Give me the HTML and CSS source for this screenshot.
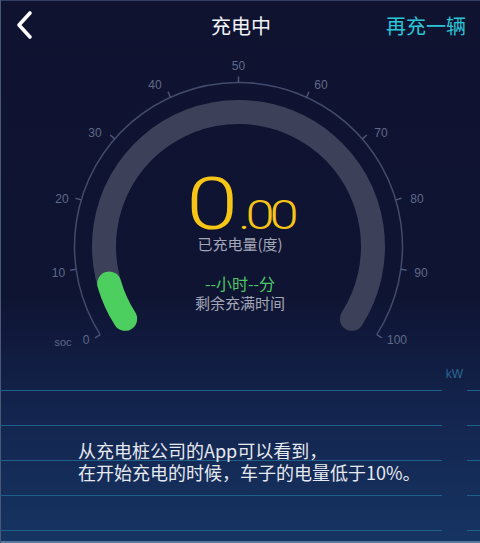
FILE: index.html
```html
<!DOCTYPE html>
<html lang="zh-CN">

<head>
  <meta charset="UTF-8">
  <title>充电中</title>
  <link rel="stylesheet" href="styles.css">
</head>

<body>

  <div class="screen">

    <header class="topbar">
      <a class="back" href="#">
        <svg width="20" height="30" viewBox="0 0 20 30">
          <polyline points="14,3 3,15 14,27" />
        </svg>
      </a>
      <h1 class="title">充电中</h1>
      <a class="action" href="#">再充一辆</a>
    </header>

    <section class="gauge">
      <svg class="dial" width="480" height="305" viewBox="0 50 480 305">
        <!-- outer scale -->
        <path class="scale" d="M100.2 334.6 A164 164 0 1 1 376.8 334.6" />
        <g class="ticks">
          <line x1="100.2" y1="334.6" x2="95.1" y2="337.8" />
          <line x1="76.1" y1="269.3" x2="70.2" y2="270.2" />
          <line x1="81.3" y1="199.9" x2="75.5" y2="198.2" />
          <line x1="114.7" y1="138.9" x2="110.2" y2="135.0" />
          <line x1="170.5" y1="97.3" x2="168.0" y2="91.8" />
          <line x1="238.5" y1="82.5" x2="238.5" y2="76.5" />
          <line x1="306.5" y1="97.3" x2="309.0" y2="91.8" />
          <line x1="362.3" y1="138.9" x2="366.8" y2="135.0" />
          <line x1="395.7" y1="199.9" x2="401.5" y2="198.2" />
          <line x1="400.9" y1="269.3" x2="406.8" y2="270.2" />
          <line x1="376.8" y1="334.6" x2="381.9" y2="337.8" />
        </g>
        <g class="labels">
          <text x="63" y="342" class="soc">soc</text>
          <text x="86" y="340">0</text>
          <text x="58.5" y="273">10</text>
          <text x="62" y="199">20</text>
          <text x="95" y="133">30</text>
          <text x="155" y="85">40</text>
          <text x="238.5" y="66">50</text>
          <text x="321" y="85">60</text>
          <text x="381" y="133">70</text>
          <text x="417" y="199">80</text>
          <text x="421" y="273">90</text>
          <text x="397" y="340">100</text>
        </g>
        <!-- track and level -->
        <path class="track" d="M125.1 318.8 A134.5 134.5 0 1 1 351.9 318.8" />
        <path class="level" d="M125.1 318.8 A134.5 134.5 0 0 1 109.2 283.6" />
      </svg>

      <div class="readout">
        <div class="value"><span class="int">0</span><span class="dec">.00</span></div>
        <div class="caption-sm">已充电量(度)</div>
        <div class="remain">--小时--分</div>
        <div class="caption-sm">剩余充满时间</div>
      </div>
    </section>

    <section class="chart">
      <div class="unit-row"><span class="unit">kW</span></div>
      <div class="rule"><span></span><span></span></div>
      <div class="rule"><span></span><span></span></div>
      <div class="rule"><span></span><span></span></div>
      <div class="rule"><span></span><span></span></div>
      <div class="rule"><span></span><span></span></div>

      <p class="note">从充电桩公司的App可以看到，<br>在开始充电的时候，车子的电量低于10%。</p>
    </section>

  </div>

</body>

</html>
```

FILE: styles.css
```css
body {
  margin: 0;
  font-family: "Noto Sans CJK SC", "Noto Sans", sans-serif;
}

.screen {
  width: 480px;
  height: 543px;
  overflow: hidden;
  background: linear-gradient(180deg, #0f1330 0%, #0f1433 55%, #132650 78%, #163462 100%);
  box-shadow: inset 1px 0 0 #4a5878, inset 0 1px 0 #343d62, inset 0 -2px 0 #58789c;
}

/* top bar */

.topbar {
  height: 50px;
  display: grid;
  grid-template-columns: 1fr auto 1fr;
  align-items: center;
  padding: 0 14px 0 16px;
}

.back {
  display: flex;
  align-items: center;
}

.back svg {
  display: block;
}

.back polyline {
  fill: none;
  stroke: #ffffff;
  stroke-width: 3.6;
  stroke-linecap: round;
  stroke-linejoin: round;
}

.title {
  margin: 0;
  font-size: 20px;
  font-weight: normal;
  color: #f2f3f7;
}

.action {
  justify-self: end;
  font-size: 20px;
  color: #2bc5d6;
  text-decoration: none;
}

/* gauge */

.gauge {
  position: relative;
  height: 305px;
}

.dial {
  display: block;
}

.scale {
  fill: none;
  stroke: #434b6d;
  stroke-width: 1.5;
}

.ticks line {
  stroke: #4d5676;
  stroke-width: 1.5;
}

.labels text {
  fill: #5f6989;
  font-family: "Liberation Sans", sans-serif;
  font-size: 12px;
  text-anchor: middle;
  dominant-baseline: central;
}

.labels .soc {
  font-size: 11px;
}

.track {
  fill: none;
  stroke: #3c4159;
  stroke-width: 24;
  stroke-linecap: round;
}

.level {
  fill: none;
  stroke: #4ccf5f;
  stroke-width: 24;
  stroke-linecap: round;
}

.readout {
  position: absolute;
  top: 126px;
  left: 0;
  right: 0;
  display: flex;
  flex-direction: column;
  align-items: center;
}

.value {
  font-family: Roboto, "Liberation Sans", sans-serif;
  font-weight: 300;
  color: #f6c515;
  line-height: 56px;
  height: 58px;
  transform: scaleX(1.28);
}

.value .int {
  font-size: 73px;
}

.value .dec {
  font-size: 41px;
  letter-spacing: -4px;
}

.caption-sm {
  font-size: 15px;
  line-height: 20px;
  color: #a3a6b7;
}

.remain {
  margin-top: 19px;
  font-size: 16px;
  line-height: 20px;
  color: #4fc765;
}

/* power chart */

.chart {
  position: relative;
  height: 188px;
  display: flex;
  flex-direction: column;
  gap: 34px;
}

.unit-row {
  height: 35px;
  margin-bottom: -34px;
  display: flex;
  justify-content: flex-end;
  align-items: center;
  padding: 3px 17px 0 0;
  box-sizing: border-box;
}

.unit {
  font-family: "Liberation Sans", sans-serif;
  font-size: 12px;
  color: #2a6890;
}

.rule {
  height: 1px;
  display: grid;
  grid-template-columns: 442px 1fr;
  column-gap: 25px;
}

.rule span {
  background: #1f5f8a;
}

.note {
  position: absolute;
  top: 84px;
  left: 78px;
  margin: 0;
  font-size: 18px;
  line-height: 22px;
  color: #e7e9f1;
}
```
